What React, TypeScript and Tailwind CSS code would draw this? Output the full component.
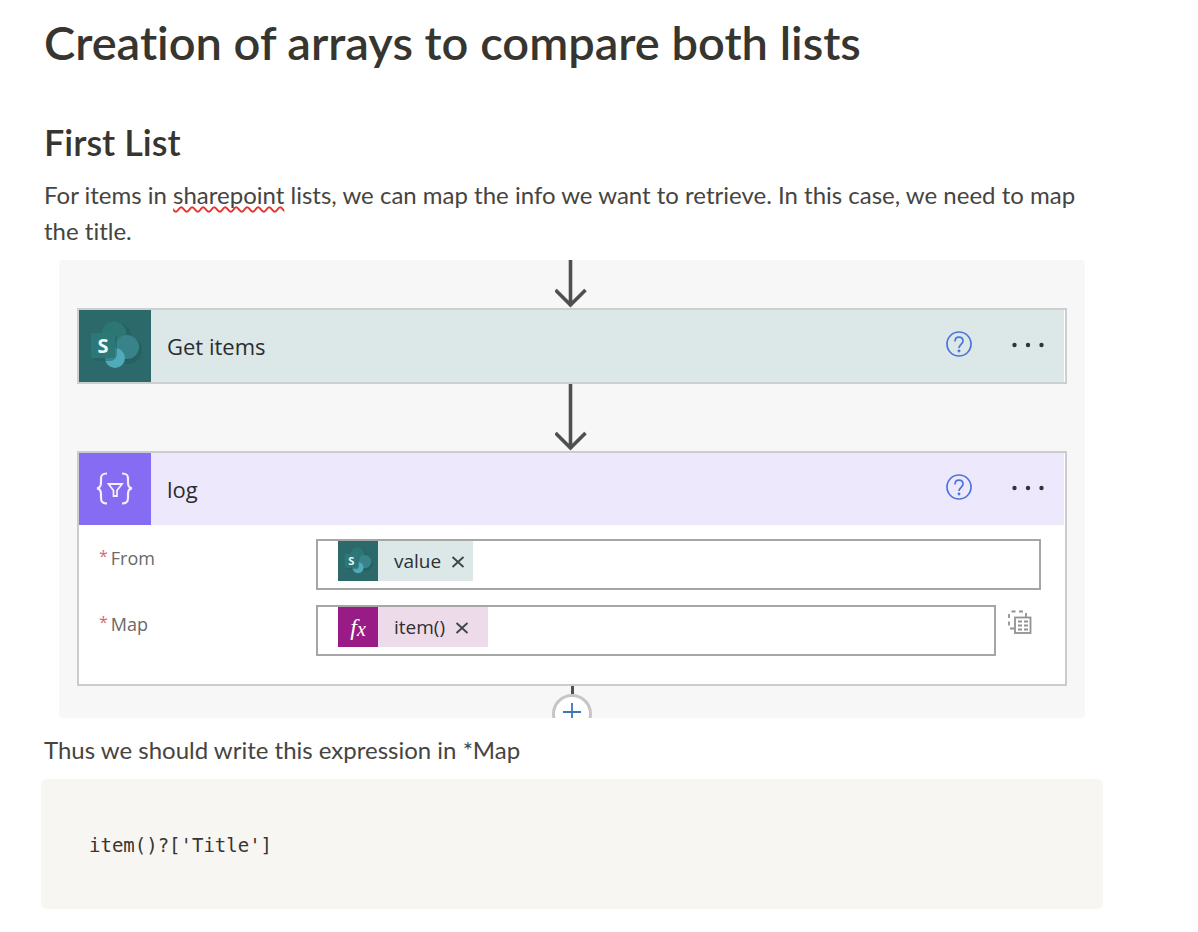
import type { ReactNode } from "react";

function ArrowDown({ tall }: { tall?: boolean }) {
  const h = tall ? 67 : 48;
  return (
    <svg width="34" height={h} viewBox={`0 0 34 ${h}`} fill="none" stroke="#505050" strokeWidth="3.600" className="block shrink-0" aria-hidden="true">
      <path d={`M15.500 0V${h - 2}M.5 ${h - 18}L15.500 ${h - 3}L30.500 ${h - 18}`} />
    </svg>
  );
}

function SharePointIcon({ className }: { className: string }) {
  return (
    <svg viewBox="0 0 72 72" className={className} aria-hidden="true">
      <rect width="72" height="72" fill="#2b696b" />
      <circle cx="37" cy="27" r="15" fill="#235d5e" opacity=".6" />
      <circle cx="49" cy="40" r="14" fill="#235d5e" opacity=".6" />
      <circle cx="35" cy="24" r="12.500" fill="#2c7774" />
      <circle cx="48" cy="37" r="12" fill="#38838a" />
      <circle cx="36" cy="48" r="10" fill="#4fabb9" />
      <path d="M15 26h20a3 3 0 0 1 3 3v15a7 7 0 0 1-7 7H18a3 3 0 0 1-3-3z" fill="#245f61" opacity=".5" />
      <rect x="12" y="23" width="24" height="25" rx="2" fill="#2c7778" />
      <text x="24" y="43" textAnchor="middle" fontSize="20" fontWeight="700" fill="#e8f7f7" fontFamily="Open Sans, sans-serif">S</text>
    </svg>
  );
}

function SelectIcon() {
  return (
    <svg viewBox="0 0 72 72" className="block size-[72px] shrink-0" aria-hidden="true">
      <rect width="72" height="72" fill="#866cf2" />
      <g fill="none" stroke="#f3efff" strokeWidth="2.200">
        <path d="M28 20.500c-5 0-6 1.500-6 5v4c0 4-1 5.500-4 5.800 3 .3 4 2 4 5.700v4c0 3.500 1 5.500 6 5.500" />
        <path d="M43 20.500c5 0 6 1.500 6 5v4c0 4 1 5.500 4 5.800-3 .3-4 2-4 5.700v4c0 3.500-1 5.500-6 5.500" />
        <path d="M29.500 31H43l-5 6.500V43h-3.500v-5.500z" strokeWidth="1.800" />
      </g>
    </svg>
  );
}

function CardHeader({ icon, title, tint }: { icon: ReactNode; title: string; tint: string }) {
  return (
    <div className={`flex h-[72px] items-center ${tint}`}>
      {icon}
      <h3 className="ml-4 flex-1 text-[22px] leading-8 text-[#2a2d30]">{title}</h3>
      <button type="button" aria-label={`Help for ${title}`} className="mr-9 mb-[5px]">
        <svg width="28" height="28" viewBox="0 0 28 28" fill="none" stroke="#4c74dc" strokeWidth="1.700" className="block">
          <circle cx="13" cy="14" r="12" />
          <path d="M9 11.500c0-2.800 1.700-4.300 4-4.300s4 1.500 4 3.900c0 3-4 3.600-4 7" />
          <circle cx="13" cy="21" r=".6" />
        </svg>
      </button>
      <button type="button" aria-label={`More options for ${title}`} className="mr-[18px] mb-[5px]">
        <svg width="36" height="20" viewBox="0 0 36 20" fill="#303436" className="block">
          <circle cx="4.500" cy="11" r="2.200" />
          <circle cx="18" cy="11" r="2.200" />
          <circle cx="31.500" cy="11" r="2.200" />
        </svg>
      </button>
    </div>
  );
}

function Token({ icon, label, tint }: { icon: ReactNode; label: string; tint: string }) {
  return (
    <span className={`flex h-10 items-center ${tint}`}>
      {icon}
      <span className="ml-4 text-[19px] text-[#2e3032]">{label}</span>
      <button type="button" aria-label={`Remove ${label}`} className="ml-[9px]">
        <svg width="16" height="16" viewBox="0 0 16 16" stroke="#3c4446" strokeWidth="1.800" className="block">
          <path d="M2.500 4l11 10M13.500 4l-11 10" />
        </svg>
      </button>
    </span>
  );
}

function Field({ id, label, token, action }: { id: string; label: string; token: ReactNode; action?: ReactNode }) {
  return (
    <div className="flex items-start">
      <label htmlFor={id} className="flex w-[217px] shrink-0 gap-[3px] pt-[3px] text-lg leading-8 text-[#6a6a6a]">
        <span className="text-base leading-7 text-[#d06a74]">*</span>
        {label}
      </label>
      <div className="flex h-[51px] min-w-0 flex-1 border-2 border-[#a6a6a6] bg-white pl-5">
        {token}
        <input id={id} type="text" className="min-w-0 flex-1 outline-none" />
      </div>
      {action}
    </div>
  );
}

export default function App() {
  return (
    <main className="min-h-screen bg-white pr-[95px] pl-[41px] font-['Lato',sans-serif] text-[#37352f] [font-variant-ligatures:none]">
      <h1 className="px-[3px] pt-[14px] text-[47px] leading-[56px] font-semibold">Creation of arrays to compare both lists</h1>
      <h2 className="px-[3px] pt-[50px] text-[36px] leading-[44px] font-semibold">First List</h2>
      <p className="px-[3px] pt-[13px] text-2xl leading-9 text-[#46443f]">
        For items in{" "}
        <span className="underline decoration-[#e5322d] decoration-wavy decoration-2 underline-offset-2 [text-decoration-skip-ink:none]">sharepoint</span>{" "}
        lists, we can map the info we want to retrieve. In this case, we need to map the title.
      </p>

      <section className="mx-[18px] mt-[11px] flex h-[458px] flex-col items-center overflow-hidden rounded-sm bg-[#f7f7f7] px-[18px] font-['Open_Sans',sans-serif]">
        <ArrowDown />
        <article className="w-full shrink-0 border-2 border-[#cccfcf] bg-white pr-px">
          <CardHeader title="Get items" tint="bg-[#dce7e8]" icon={<SharePointIcon className="block size-[72px] shrink-0" />} />
        </article>
        <ArrowDown tall />
        <article className="w-full shrink-0 border-2 border-[#cccccf] bg-white">
          <div className="pr-px">
            <CardHeader title="log" tint="bg-[#ede8fc]" icon={<SelectIcon />} />
          </div>
          <div className="flex flex-col gap-[15px] pt-[14px] pr-6 pb-7 pl-5">
            <Field
              id="from"
              label="From"
              token={<Token label="value" tint="bg-[#dce8e8] pr-[7px]" icon={<SharePointIcon className="block size-10 shrink-0" />} />}
            />
            <Field
              id="map"
              label="Map"
              token={
                <Token
                  label="item()"
                  tint="bg-[#eddbea] pr-[18px]"
                  icon={
                    <span className="flex size-10 items-center justify-center bg-[#991b85] font-['Liberation_Serif',serif] text-2xl text-white italic">
                      f<span className="pt-1 text-xl">x</span>
                    </span>
                  }
                />
              }
              action={
                <button type="button" aria-label="Switch Map to text mode" className="mt-[5px] mr-[9px] ml-3">
                  <svg width="24" height="25" viewBox="0 0 24 25" fill="none" stroke="#929292" className="block">
                    <path d="M1 8V4M3.500 1.500h4M11 1.500h4M18 3v4M1 11.500v4M2 18.500h4" strokeWidth="1.800" />
                    <rect x="7" y="7.500" width="15.500" height="15.500" strokeWidth="1.800" />
                    <path d="M10 11.500h4M16 11.500h4M10 15.500h4M16 15.500h4M10 19.500h4M16 19.500h4" strokeWidth="1.800" />
                  </svg>
                </button>
              }
            />
          </div>
        </article>
        <span className="h-2 w-[3px] shrink-0 bg-[#505050]" />
        <button type="button" aria-label="Insert a new step" className="flex size-10 shrink-0 items-center justify-center rounded-full border-[3px] border-[#c6c6c6] bg-white pb-1">
          <svg width="18" height="18" viewBox="0 0 18 18" stroke="#3c78b8" strokeWidth="1.800">
            <path d="M9 0v18M0 9h18" />
          </svg>
        </button>
      </section>

      <p className="px-[3px] pt-[14px] text-2xl leading-9 text-[#46443f]">Thus we should write this expression in *Map</p>
      <pre className="mt-[11px] rounded-md bg-[#f7f6f3] px-12 pt-[52px] pb-12 text-[19px] leading-7">
        <code className="font-['DejaVu_Sans_Mono',monospace]">item()?['Title']</code>
      </pre>
    </main>
  );
}
